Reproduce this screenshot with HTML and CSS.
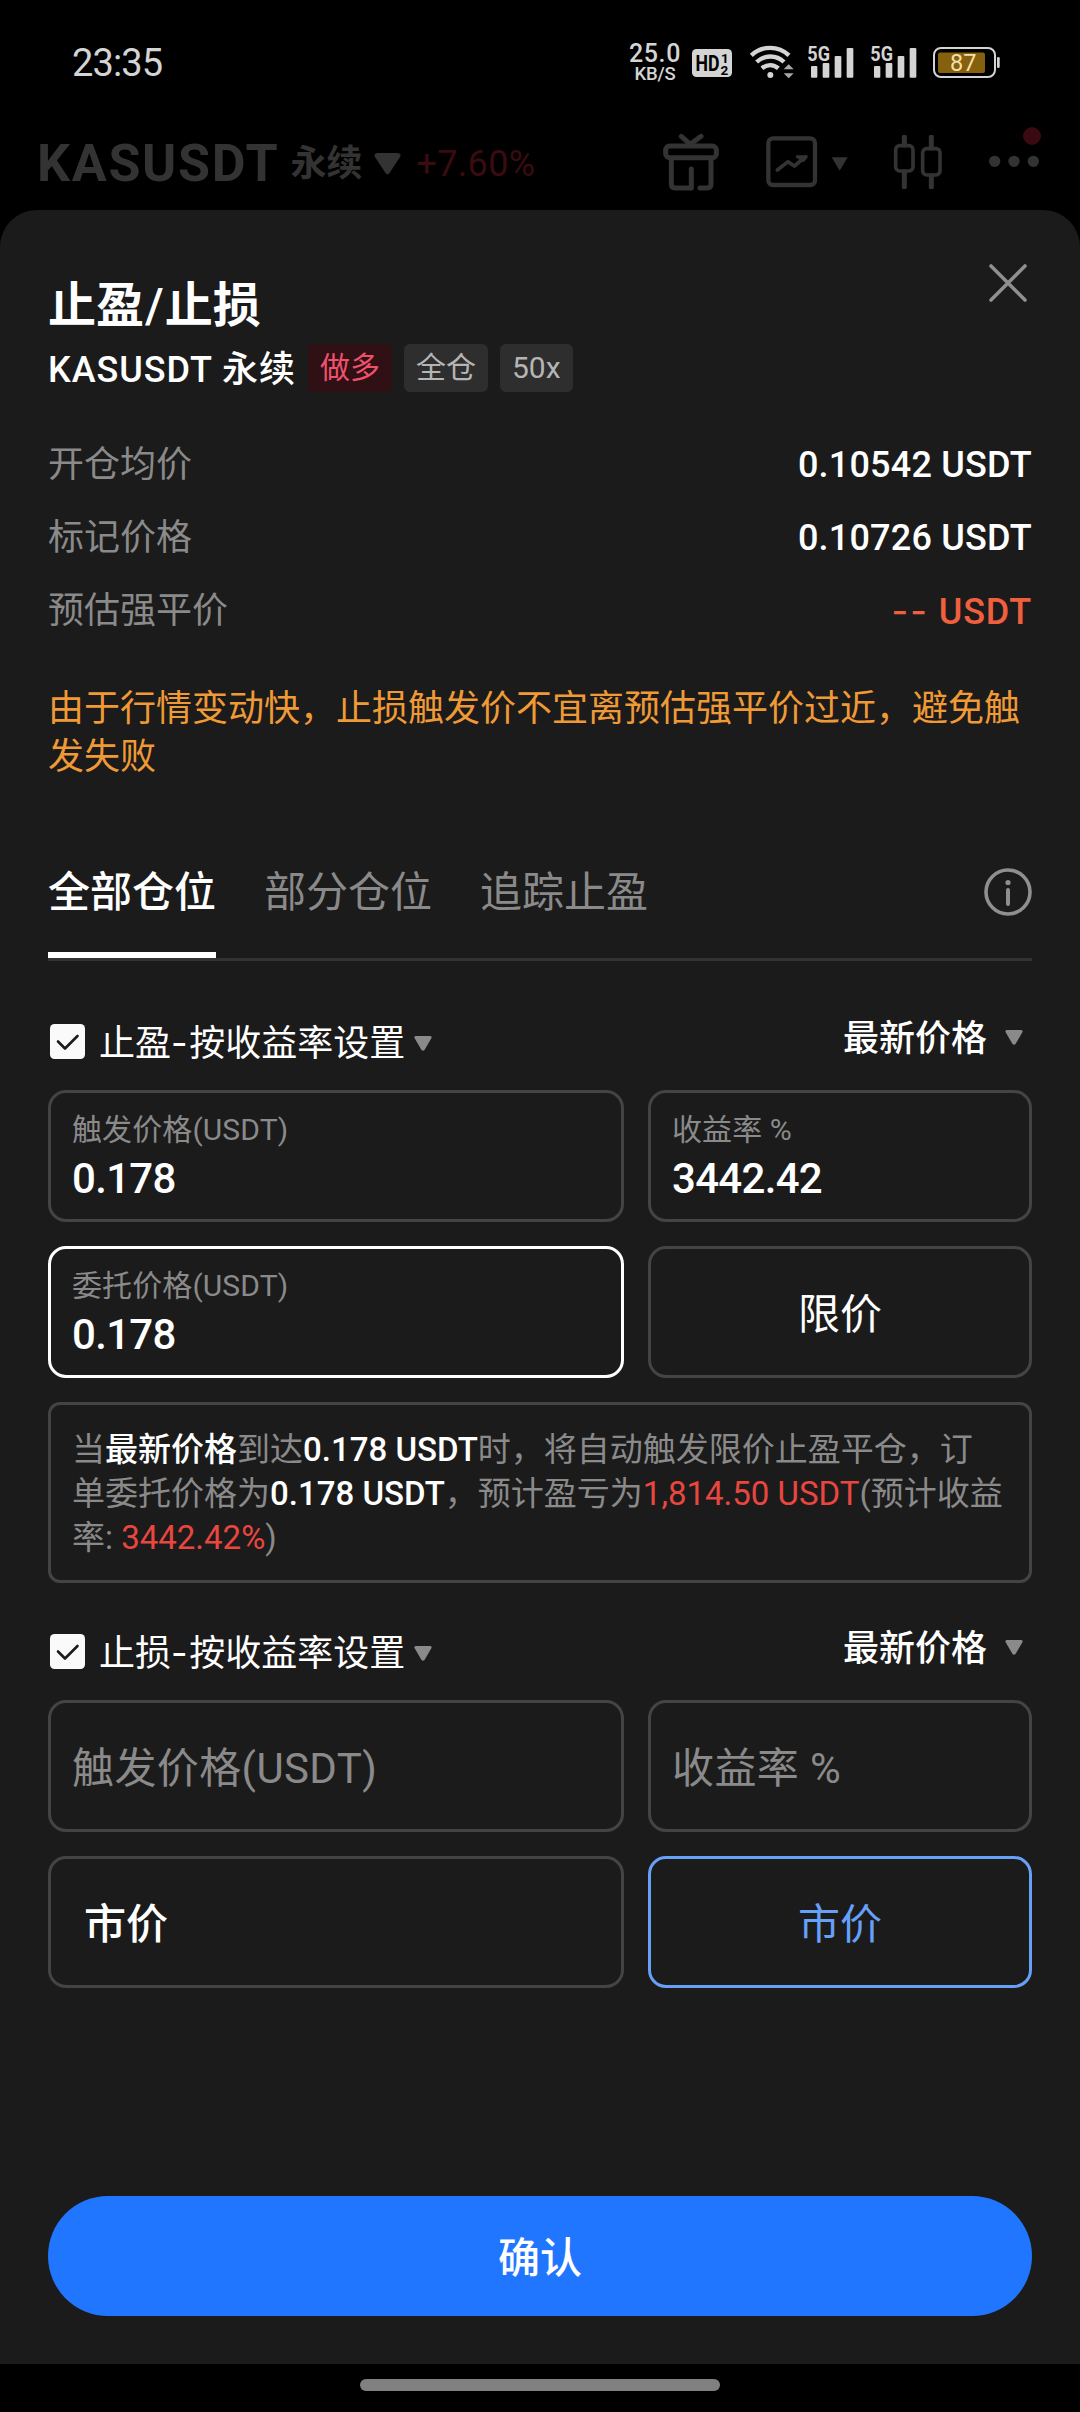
FILE: index.html
```html
<!DOCTYPE html>
<html lang="zh-CN">
<head>
<meta charset="utf-8">
<title>止盈/止损</title>
<link rel="stylesheet" href="styles.css">
</head>
<body>
<div class="screen">
  <div class="status">
    <span class="clock">23:35</span>
    <div class="status-icons">
      <div class="speed"><span class="speed-value">25.0</span><span class="speed-unit">KB/S</span></div>
      <svg class="hd" width="40" height="28" viewBox="0 0 40 28"><rect width="40" height="28" rx="4.5" fill="#d4d4d4"/><text x="3.5" y="22" font-size="22" font-weight="700" textLength="24" lengthAdjust="spacingAndGlyphs">HD</text><text x="29" y="13.500" font-size="13.500" font-weight="700">1</text><text x="28.500" y="25.500" font-size="13.500" font-weight="700">2</text></svg>
      <svg class="wifi" width="46" height="36" viewBox="0 0 138 108" fill="none" stroke="#d4d4d4" stroke-width="13"><path d="M7 37a82 82 0 0 1 113 0M23 57a59 59 0 0 1 82 0M39 76a36 36 0 0 1 49 0"/><circle cx="64" cy="96" r="9" fill="#d4d4d4" stroke="none"/><path d="M104 79l15-15 15 15zM104 91l15 15 15-15z" fill="#a8a8a8" stroke="none"/></svg>
      <svg class="signal" width="47" height="34" viewBox="0 0 141 102" fill="#d4d4d4"><text x="1" y="50" font-size="59" font-weight="700" textLength="68" lengthAdjust="spacingAndGlyphs">5G</text><rect x="12" y="66" width="19" height="35" rx="3"/><rect x="47" y="57" width="20" height="44" rx="3"/><rect x="83" y="36" width="20" height="65" rx="3"/><rect x="119" y="12" width="20" height="89" rx="3"/></svg>
      <svg class="signal" width="47" height="34" viewBox="0 0 141 102" fill="#d4d4d4"><text x="1" y="50" font-size="59" font-weight="700" textLength="68" lengthAdjust="spacingAndGlyphs">5G</text><rect x="12" y="66" width="19" height="35" rx="3"/><rect x="47" y="57" width="20" height="44" rx="3"/><rect x="83" y="36" width="20" height="65" rx="3"/><rect x="119" y="12" width="20" height="89" rx="3"/></svg>
      <svg class="battery" width="67" height="31" viewBox="0 0 67 31"><rect x="1" y="1" width="61" height="29" rx="7" fill="none" stroke="#d4d4d4" stroke-width="2"/><rect x="5" y="5.500" width="47" height="20.500" rx="2" fill="#86610d"/><rect x="64" y="10" width="2.700" height="11" rx="1.300" fill="#d4d4d4"/><text x="17" y="23.700" font-size="23.500" fill="#f5dfa8" textLength="26.500">87</text></svg>
    </div>
  </div>

  <header class="topbar">
    <span class="pair">KASUSDT</span>
    <span class="pair-kind">永续</span>
    <svg class="pair-caret" width="27" height="22" viewBox="0 0 27 22"><path d="M3 0h21q4 1 2 4L15.500 20q-2 2.500-4 0L1 4Q-1 1 3 0z" fill="#333"/></svg>
    <span class="change">+7.60%</span>
    <div class="tools">
      <svg width="56" height="58" viewBox="0 0 168 174" fill="none" stroke="#333" stroke-width="15" stroke-linecap="round" stroke-linejoin="round"><path d="M55 10l27 24 32-24"/><rect x="8" y="39" width="152" height="35" rx="12"/><path d="M25 78v75q0 12 12 12h48v-57M111 165h20q13 0 13-12V78"/></svg>
      <svg width="82" height="52" viewBox="0 0 246 156" fill="none" stroke="#333" stroke-width="13" stroke-linecap="round" stroke-linejoin="round"><rect x="7" y="7" width="140" height="140" rx="14"/><path d="M34 102l32-25 19 13 34-28" stroke-width="11"/><path d="M93 62h28l-9 12z" stroke-width="8" fill="#333"/><path d="M197 64h48l-24 40z" fill="#333" stroke="none"/></svg>
      <svg width="50" height="54" viewBox="0 0 150 162" fill="none" stroke="#333" stroke-width="11" stroke-linecap="round"><rect x="8" y="32" width="52" height="76" rx="12"/><rect x="89" y="41" width="52" height="79" rx="12"/><path d="M34 6v24M34 110v46M115 6v33M115 122v34" stroke-width="15"/></svg>
      <svg width="52" height="42" viewBox="0 0 156 126" fill="#333"><circle cx="17" cy="106" r="17"/><circle cx="75" cy="106" r="17"/><circle cx="133" cy="106" r="17"/><circle cx="129" cy="30" r="27" fill="#3b0910"/></svg>
    </div>
  </header>

  <main class="sheet">
    <div class="title-row">
      <h1>止盈<span class="slash">/</span>止损</h1>
      <svg class="close" width="40" height="40" viewBox="0 0 40 40"><path d="M3 3l34 34M37 3L3 37" stroke="#8f8f8f" stroke-width="3.600" stroke-linecap="round"/></svg>
    </div>
    <div class="contract">
      <span class="contract-name">KASUSDT 永续</span>
      <span class="tag tag-long">做多</span>
      <span class="tag">全仓</span>
      <span class="tag">50x</span>
    </div>

    <dl class="prices">
      <div><dt>开仓均价</dt><dd><span class="num">0.10542</span> USDT</dd></div>
      <div><dt>标记价格</dt><dd><span class="num">0.10726</span> USDT</dd></div>
      <div class="liq"><dt>预估强平价</dt><dd><span class="dash">--</span> USDT</dd></div>
    </dl>

    <p class="warning">由于行情变动快，止损触发价不宜离预估强平价过近，避免触发失败</p>

    <nav class="tabs">
      <span class="tab active">全部仓位</span>
      <span class="tab">部分仓位</span>
      <span class="tab">追踪止盈</span>
      <svg class="info" width="48" height="48" viewBox="0 0 48 48"><circle cx="24" cy="24" r="22" fill="none" stroke="#8f8f8f" stroke-width="3.600"/><circle cx="24" cy="14.500" r="2.600" fill="#8f8f8f"/><path d="M24 22v14" stroke="#8f8f8f" stroke-width="4" stroke-linecap="round"/></svg>
    </nav>

    <section class="group">
      <div class="group-head">
        <svg class="check" width="35" height="35" viewBox="0 0 35 35"><rect width="35" height="35" rx="4.500" fill="#fafafa"/><path d="M8 17.500l7 7L27.500 12" fill="none" stroke="#1c1c1c" stroke-width="2.600" stroke-linecap="round" stroke-linejoin="round"/></svg>
        <span class="mode">止盈<span class="dash">-</span>按收益率设置</span>
        <svg class="caret" width="18" height="15" viewBox="0 0 18 15"><path d="M1.500 0h15q1.500.5 1 2L10.500 14q-1.500 1.500-3 0L.5 2Q0 .5 1.500 0z" fill="#8a8a8a"/></svg>
        <span class="source">最新价格<svg width="18" height="15" viewBox="0 0 18 15"><path d="M1.500 0h15q1.500.5 1 2L10.500 14q-1.500 1.500-3 0L.5 2Q0 .5 1.500 0z" fill="#8a8a8a"/></svg></span>
      </div>
      <div class="fields">
        <div class="field"><label>触发价格(USDT)</label><b>0.178</b></div>
        <div class="field"><label>收益率 %</label><b>3442.42</b></div>
        <div class="field focused"><label>委托价格(USDT)</label><b>0.178</b></div>
        <div class="field button">限价</div>
      </div>
      <p class="summary">当<em>最新价格</em>到达<em>0.178 USDT</em>时，将自动触发限价止盈平仓，订<br>单委托价格为<em>0.178 USDT</em>，预计盈亏为<i>1,814.50 USDT</i>(预计收益<br>率: <i>3442.42%</i>)</p>
    </section>

    <section class="group">
      <div class="group-head">
        <svg class="check" width="35" height="35" viewBox="0 0 35 35"><rect width="35" height="35" rx="4.500" fill="#fafafa"/><path d="M8 17.500l7 7L27.500 12" fill="none" stroke="#1c1c1c" stroke-width="2.600" stroke-linecap="round" stroke-linejoin="round"/></svg>
        <span class="mode">止损<span class="dash">-</span>按收益率设置</span>
        <svg class="caret" width="18" height="15" viewBox="0 0 18 15"><path d="M1.500 0h15q1.500.5 1 2L10.500 14q-1.500 1.500-3 0L.5 2Q0 .5 1.500 0z" fill="#8a8a8a"/></svg>
        <span class="source">最新价格<svg width="18" height="15" viewBox="0 0 18 15"><path d="M1.500 0h15q1.500.5 1 2L10.500 14q-1.500 1.500-3 0L.5 2Q0 .5 1.500 0z" fill="#8a8a8a"/></svg></span>
      </div>
      <div class="fields">
        <div class="field empty">触发价格(USDT)</div>
        <div class="field empty">收益率 %</div>
        <div class="field market">市价</div>
        <div class="field button selected">市价</div>
      </div>
    </section>

    <div class="confirm">确认</div>
  </main>
  <div class="home"><span></span></div>
</div>
</body>
</html>
```
FILE: styles.css
```css
* { box-sizing: border-box; margin: 0; padding: 0; }

body {
  background: #000;
  color: #fff;
  font-family: Roboto, "Noto Sans CJK SC", sans-serif;
  font-size: 36px;
}

svg { display: block; flex: none; }

.screen {
  width: 1080px;
  height: 2412px;
  display: flex;
  flex-direction: column;
  overflow: hidden;
  white-space: nowrap;
}

/* Status bar */
.status {
  height: 116px;
  padding: 42px 80px 0 72px;
  display: flex;
  justify-content: space-between;
  color: #d4d4d4;
}
.clock { font-size: 38px; line-height: 42px; letter-spacing: -0.9px; }
.status-icons { display: flex; align-items: flex-start; height: 42px; }
.speed { display: flex; flex-direction: column; align-items: center; font-weight: 500; margin-right: 11px; width: 52px; }
.speed-value { font-size: 25px; line-height: 24px; letter-spacing: 0.6px; }
.speed-unit { font-size: 18.5px; line-height: 16px; letter-spacing: -0.2px; }
.hd { margin: 7px 17px 0 0; }
.wifi { margin: 1px 12px 0 0; }
.signal { margin: 2px 16px 0 0; }
.battery { margin-top: 5px; }

/* Dimmed page header */
.topbar {
  height: 94px;
  padding: 0 39px 0 37px;
  display: flex;
  align-items: flex-start;
  color: #333;
}
.topbar > span { line-height: 96px; }
.pair { font-size: 52px; font-weight: 700; letter-spacing: 1.7px; }
.pair-kind { font-weight: 700; margin-left: 11px; }
.pair-caret { margin: 37px 0 0 11px; }
.change { color: #3b0b12; margin-left: 16px; letter-spacing: 0.3px; }
.tools { display: flex; align-items: flex-start; margin-left: auto; }
.tools svg:nth-child(1) { margin: 17px 47px 0 0; }
.tools svg:nth-child(2) { margin: 20px 45px 0 0; }
.tools svg:nth-child(3) { margin: 19px 46px 0 0; }
.tools svg:nth-child(4) { margin: 10px 0 0; }

/* Bottom sheet */
.sheet {
  height: 2154px;
  padding: 66px 48px 48px;
  background: #1b1b1b;
  border-radius: 37px 37px 0 0;
  display: flex;
  flex-direction: column;
}
.title-row { display: flex; justify-content: space-between; height: 60px; }
h1 { font-size: 48px; line-height: 60px; font-weight: 700; }
.slash { font-weight: 500; padding: 0 1px; }
.close { margin: -13px 4px 0 0; }

.contract { display: flex; align-items: flex-start; gap: 12px; height: 48px; margin-top: 8px; }
.contract-name { font-weight: 500; letter-spacing: 0.95px; line-height: 52px; }
.tag {
  height: 48px;
  line-height: 48px;
  padding: 0 12px;
  font-size: 30px;
  color: #b5b5b5;
  background: #2e2e2e;
  border-radius: 6px;
}
.tag-long { color: #f0506a; background: #2e1015; border-radius: 3px; }

.prices { margin-top: 37px; }
.prices div { display: flex; justify-content: space-between; height: 73px; line-height: 73px; }
dt { color: #8a8a8a; }
dd { font-weight: 500; letter-spacing: 0.2px; }
.liq dd { color: #f05f3e; letter-spacing: 0.8px; line-height: 72px; }
.dash { font-family: Inter, sans-serif; letter-spacing: 1.6px; }
.liq .dash { letter-spacing: 2.2px; }

.warning { margin-top: 37px; line-height: 48px; color: #f09a36; white-space: normal; }

.tabs {
  margin-top: 69px;
  height: 111px;
  border-bottom: 3px solid #333;
  display: flex;
  gap: 48px;
  font-size: 42px;
  line-height: 86px;
  color: #8a8a8a;
}
.tab { height: 108px; }
.active { color: #fff; font-weight: 500; border-bottom: 6px solid #fff; }
.info { margin: 18px 0 0 auto; }

.group-head { height: 129px; display: flex; }
.check { margin: 63px 14px 0 2px; }
.mode { line-height: 165px; }
.caret { margin: 75px 0 0 9px; }
.source { display: flex; align-items: flex-start; margin: 0 9px 0 auto; font-weight: 500; line-height: 156px; }
.source svg { margin: 69px 0 0 18px; }

.fields { display: grid; grid-template-columns: 576px 384px; gap: 24px; }
.field {
  height: 132px;
  border: 3px solid #444;
  border-radius: 18px;
  padding: 17px 21px 0;
  font-size: 42px;
}
.field label { display: block; font-size: 30px; line-height: 40px; letter-spacing: 0.1px; color: #8a8a8a; }
.field b { display: block; line-height: 57px; font-weight: 500; letter-spacing: -0.7px; }
.focused { border-color: #fff; }
.empty, .market, .button { display: flex; align-items: center; padding-top: 0; padding-bottom: 4px; }
.empty { color: #8a8a8a; letter-spacing: 0.4px; }
.market { padding-left: 33px; font-weight: 500; }
.button { justify-content: center; }
.selected { color: #66a0f7; border-color: #66a0f7; }

.summary {
  margin-top: 24px;
  height: 181px;
  border: 3px solid #444;
  border-radius: 12px;
  padding: 23px 21px 0;
  font-size: 33px;
  line-height: 44px;
  color: #8a8a8a;
}
.summary em { font-style: normal; font-weight: 500; color: #fff; }
.summary i { font-style: normal; color: #ea4640; }
.group + .group .group-head { height: 117px; }
.group + .group .check { margin-top: 51px; }
.group + .group .mode { line-height: 141px; }
.group + .group .caret { margin-top: 63px; }
.group + .group .source { line-height: 132px; }
.group + .group .source svg { margin-top: 57px; }

.confirm {
  margin-top: auto;
  height: 120px;
  line-height: 125px;
  border-radius: 60px;
  background: #2176ff;
  text-align: center;
  font-size: 42px;
  font-weight: 500;
}

.home { height: 48px; display: flex; justify-content: center; padding-top: 15px; }
.home span { width: 360px; height: 12px; border-radius: 6px; background: #808080; }
```
